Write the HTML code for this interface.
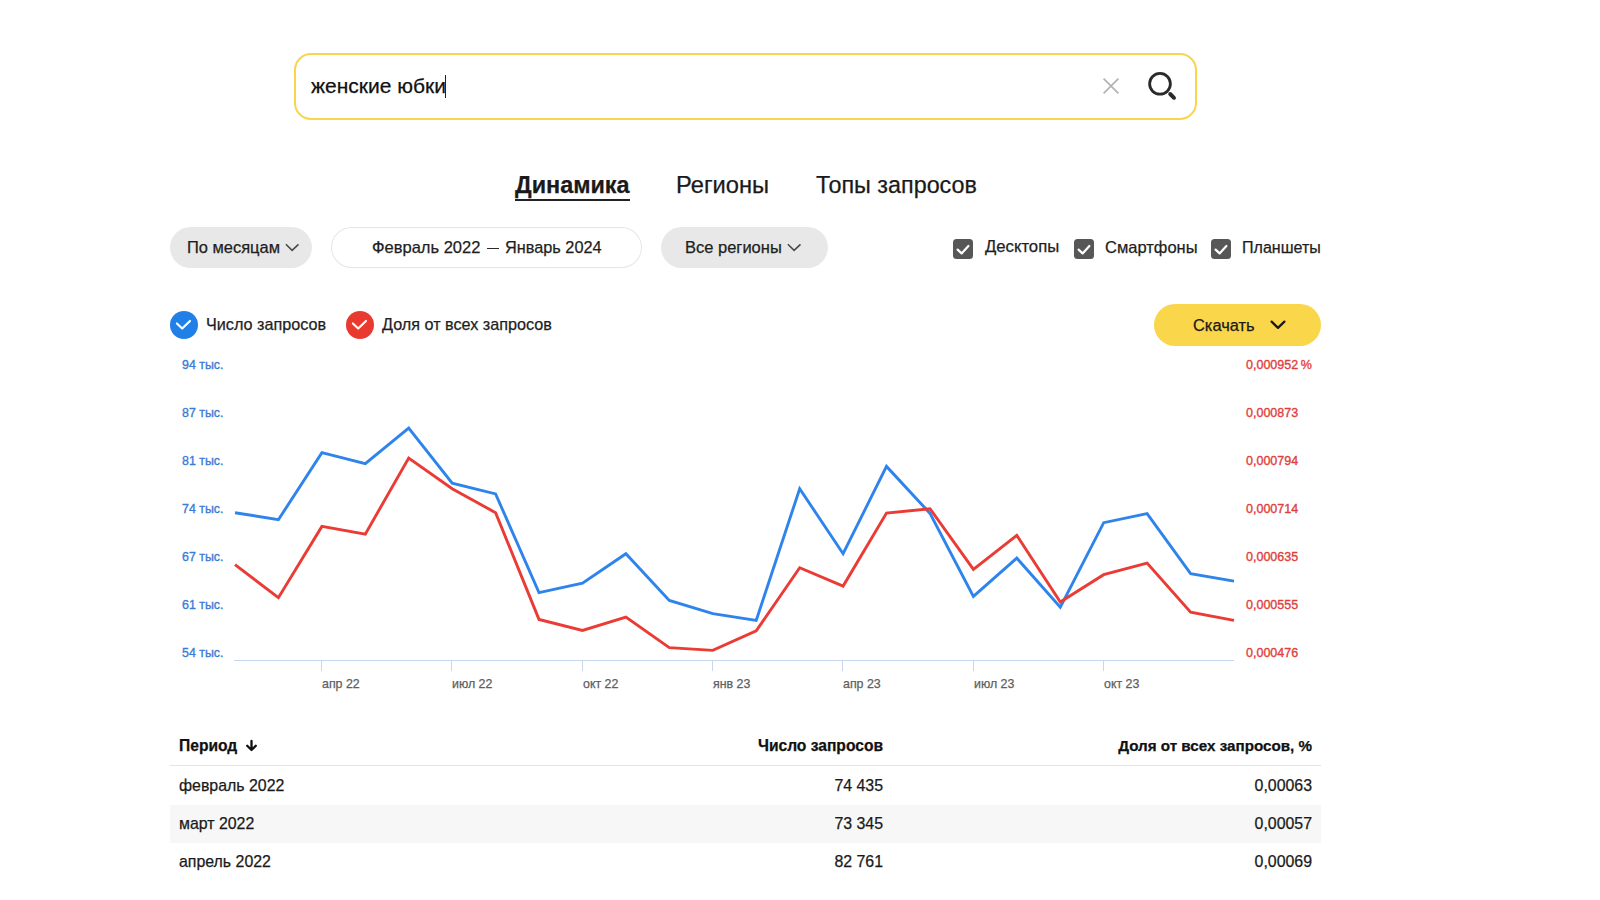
<!DOCTYPE html>
<html lang="ru">
<head>
<meta charset="utf-8">
<style>
html,body{margin:0;padding:0;background:#fff;}
body{width:1600px;height:900px;position:relative;overflow:hidden;font-family:"Liberation Sans",sans-serif;color:#1b1b1b;}
.a{-webkit-text-stroke:0.25px currentColor;}
.a{position:absolute;white-space:nowrap;}
.search{left:294px;top:52.7px;width:899px;height:63px;border:2px solid #fbd44e;border-radius:17px;}
.qtext{left:311px;top:71px;font-size:21px;line-height:30px;color:#111;}
.cursor{left:445px;top:75px;width:1.2px;height:23px;background:#222;}
.tab{top:170px;font-size:23.7px;line-height:30px;color:#1a1a1a;}
.tab.active{font-weight:bold;font-size:23.4px;}
.uline{left:514.5px;top:199px;width:115px;height:2px;background:#222;}
.pill{top:227px;height:41px;border-radius:21px;background:#e8e8e8;}
.pill.out{background:#fff;box-shadow:inset 0 0 0 1px #e5e5e5;}
.ptxt{font-size:16.2px;line-height:20px;top:237px;color:#1e1e1e;}
.cb{top:239.3px;width:19.8px;height:19.8px;border-radius:3.5px;background:#575757;}
.cbl{top:237px;font-size:16.2px;line-height:20px;color:#1e1e1e;}
.lg{top:314px;font-size:16.2px;line-height:20px;color:#1e1e1e;}
.dot{top:311px;width:28px;height:28px;border-radius:50%;}
.btn{left:1154px;top:304px;width:167px;height:42px;border-radius:21px;background:#fad64b;}
.yl{font-size:12.4px;line-height:14px;color:#3a7cd6;left:182px;-webkit-text-stroke:0.35px #3a7cd6;}
.yr{font-size:12.5px;line-height:14px;color:#e0403b;left:1246px;-webkit-text-stroke:0.35px #e0403b;}
.xl{font-size:12.4px;line-height:14px;color:#5e5e5e;top:677px;}
.th{top:737px;font-size:15.6px;line-height:18px;font-weight:bold;color:#111;}
.td{font-size:15.9px;line-height:18px;color:#1a1a1a;}
.row2{left:170px;top:805px;width:1151px;height:38px;background:#f7f7f7;}
.hline{left:170px;top:765px;width:1151px;height:1px;background:#e4e4e4;}
.r{text-align:right;}
</style>
</head>
<body>
<!-- search -->
<div class="a search"></div>
<div class="a qtext">женские юбки</div>
<div class="a cursor"></div>
<svg class="a" style="left:1100px;top:66px" width="90" height="40" viewBox="1100 66 90 40">
  <path d="M1103.6 78.6 L1118.4 93.4 M1118.4 78.6 L1103.6 93.4" stroke="#b3b3b3" stroke-width="1.7" fill="none"/>
  <circle cx="1160" cy="83.8" r="10.4" stroke="#2a2a2a" stroke-width="2.8" fill="none"/>
  <path d="M1170.2 94 L1174 97.8" stroke="#2a2a2a" stroke-width="3.9" stroke-linecap="round"/>
</svg>

<!-- tabs -->
<div class="a tab active" style="left:515px">Динамика</div>
<div class="a uline"></div>
<div class="a tab" style="left:676px">Регионы</div>
<div class="a tab" style="left:816px;font-size:23.35px">Топы запросов</div>

<!-- filters -->
<div class="a pill" style="left:170px;width:142px"></div>
<div class="a ptxt" style="left:187px;font-size:16.45px">По месяцам</div>
<svg class="a" style="left:284px;top:240px" width="16" height="14" viewBox="0 0 16 14"><path d="M1.9 4.3 L8.1 10.4 L14.5 4.3" stroke="#4a4a4a" stroke-width="1.6" fill="none"/></svg>

<div class="a pill out" style="left:331px;width:311px"></div>
<div class="a ptxt" style="left:372px;font-size:16.5px">Февраль 2022</div>
<div class="a" style="left:487px;top:247.6px;width:12px;height:1.7px;background:#2a2a2a"></div>
<div class="a ptxt" style="left:505px;font-size:16.3px">Январь 2024</div>

<div class="a pill" style="left:661px;width:167px"></div>
<div class="a ptxt" style="left:685px;font-size:16.5px">Все регионы</div>
<svg class="a" style="left:786px;top:240px" width="16" height="14" viewBox="0 0 16 14"><path d="M1.9 4.3 L8.1 10.4 L14.5 4.3" stroke="#4a4a4a" stroke-width="1.6" fill="none"/></svg>

<div class="a cb" style="left:953px"><svg width="20" height="20" viewBox="0 0 20 20" style="display:block"><path d="M4.6 10.6 L8.6 14.4 L15.4 7" stroke="#fff" stroke-width="2.2" stroke-linecap="round" stroke-linejoin="round" fill="none"/></svg></div>
<div class="a cbl" style="left:985px;font-size:16.7px">Десктопы</div>
<div class="a cb" style="left:1074px"><svg width="20" height="20" viewBox="0 0 20 20" style="display:block"><path d="M4.6 10.6 L8.6 14.4 L15.4 7" stroke="#fff" stroke-width="2.2" stroke-linecap="round" stroke-linejoin="round" fill="none"/></svg></div>
<div class="a cbl" style="left:1105px;font-size:16.5px">Смартфоны</div>
<div class="a cb" style="left:1211px"><svg width="20" height="20" viewBox="0 0 20 20" style="display:block"><path d="M4.6 10.6 L8.6 14.4 L15.4 7" stroke="#fff" stroke-width="2.2" stroke-linecap="round" stroke-linejoin="round" fill="none"/></svg></div>
<div class="a cbl" style="left:1242px;font-size:16.05px">Планшеты</div>

<!-- legend -->
<div class="a dot" style="left:170px;background:#2180e8"><svg width="28" height="28" viewBox="0 0 28 28" style="display:block"><path d="M6.9 12.4 L12.2 17.6 L20 9.9" stroke="#fff" stroke-width="2.1" stroke-linecap="round" stroke-linejoin="round" fill="none"/></svg></div>
<div class="a lg" style="left:206px">Число запросов</div>
<div class="a dot" style="left:346px;background:#ea3a30"><svg width="28" height="28" viewBox="0 0 28 28" style="display:block"><path d="M6.9 12.4 L12.2 17.6 L20 9.9" stroke="#fff" stroke-width="2.1" stroke-linecap="round" stroke-linejoin="round" fill="none"/></svg></div>
<div class="a lg" style="left:382px">Доля от всех запросов</div>

<div class="a btn"></div>
<div class="a lg" style="left:1193px;top:315px;color:#1a1a1a;font-size:16.45px">Скачать</div>
<svg class="a" style="left:1268px;top:317.6px" width="20" height="14" viewBox="0 0 20 14"><path d="M3.6 3.6 L10 9.8 L16.4 3.6" stroke="#1a1a1a" stroke-width="2.3" stroke-linecap="round" stroke-linejoin="round" fill="none"/></svg>

<!-- y labels -->
<div class="a yl" style="top:358px">94 тыс.</div>
<div class="a yl" style="top:406px">87 тыс.</div>
<div class="a yl" style="top:454px">81 тыс.</div>
<div class="a yl" style="top:502px">74 тыс.</div>
<div class="a yl" style="top:550px">67 тыс.</div>
<div class="a yl" style="top:598px">61 тыс.</div>
<div class="a yl" style="top:646px">54 тыс.</div>

<div class="a yr" style="top:358px">0,000952&thinsp;%</div>
<div class="a yr" style="top:406px">0,000873</div>
<div class="a yr" style="top:454px">0,000794</div>
<div class="a yr" style="top:502px">0,000714</div>
<div class="a yr" style="top:550px">0,000635</div>
<div class="a yr" style="top:598px">0,000555</div>
<div class="a yr" style="top:646px">0,000476</div>

<!-- chart -->
<svg class="a" style="left:0;top:0" width="1600" height="900" viewBox="0 0 1600 900">
  <g stroke="#c8d6ef" stroke-width="1" fill="none">
    <path d="M234 660.5 H1234"/>
    <path d="M321.5 660 V671 M451.5 660 V671 M582.5 660 V671 M712.5 660 V671 M842.5 660 V671 M973.5 660 V671 M1103.5 660 V671"/>
  </g>
  <polyline id="blue" fill="none" stroke="#2f84ec" stroke-width="2.9" stroke-linejoin="miter" points="235.0,512.7 278.4,519.7 321.9,452.7 365.3,463.7 408.7,428.1 452.2,483.1 495.6,493.9 539.0,592.7 582.5,583.1 625.9,553.7 669.3,600.4 712.8,613.7 756.2,620.4 799.7,488.7 843.1,553.7 886.5,466.4 930.0,513.4 973.4,596.4 1016.8,558.1 1060.3,607.1 1103.7,522.7 1147.1,513.7 1190.6,573.7 1234.0,581.1"/>
  <polyline id="red" fill="none" stroke="#ea3b34" stroke-width="2.9" stroke-linejoin="miter" points="235.0,564.7 278.4,597.7 321.9,526.4 365.3,534.1 408.7,458.1 452.2,488.7 495.6,512.7 539.0,619.4 582.5,630.4 625.9,617.1 669.3,647.7 712.8,650.4 756.2,630.9 799.7,567.7 843.1,586.1 886.5,513.1 930.0,508.7 973.4,569.4 1016.8,535.4 1060.3,602.1 1103.7,574.7 1147.1,563.1 1190.6,612.1 1234.0,620.4"/>
</svg>

<div class="a xl" style="left:322px">апр 22</div>
<div class="a xl" style="left:452px">июл 22</div>
<div class="a xl" style="left:583px">окт 22</div>
<div class="a xl" style="left:713px">янв 23</div>
<div class="a xl" style="left:843px">апр 23</div>
<div class="a xl" style="left:974px">июл 23</div>
<div class="a xl" style="left:1104px">окт 23</div>

<!-- table -->
<div class="a th" style="left:179px">Период</div>
<svg class="a" style="left:244px;top:738px" width="16" height="16" viewBox="0 0 16 16"><path d="M7.5 3 V11.8 M3.2 7.8 L7.5 12 L11.8 7.8" stroke="#111" stroke-width="2.3" stroke-linecap="round" stroke-linejoin="round" fill="none"/></svg>
<div class="a th r" style="right:717px">Число запросов</div>
<div class="a th r" style="right:288px;font-size:15.2px">Доля от всех запросов, %</div>
<div class="a hline"></div>
<div class="a row2"></div>
<div class="a td" style="left:179px;top:777px">февраль 2022</div>
<div class="a td r" style="right:717px;top:777px">74 435</div>
<div class="a td r" style="right:288px;top:777px">0,00063</div>
<div class="a td" style="left:179px;top:815px">март 2022</div>
<div class="a td r" style="right:717px;top:815px">73 345</div>
<div class="a td r" style="right:288px;top:815px">0,00057</div>
<div class="a td" style="left:179px;top:853px">апрель 2022</div>
<div class="a td r" style="right:717px;top:853px">82 761</div>
<div class="a td r" style="right:288px;top:853px">0,00069</div>
</body>
</html>
